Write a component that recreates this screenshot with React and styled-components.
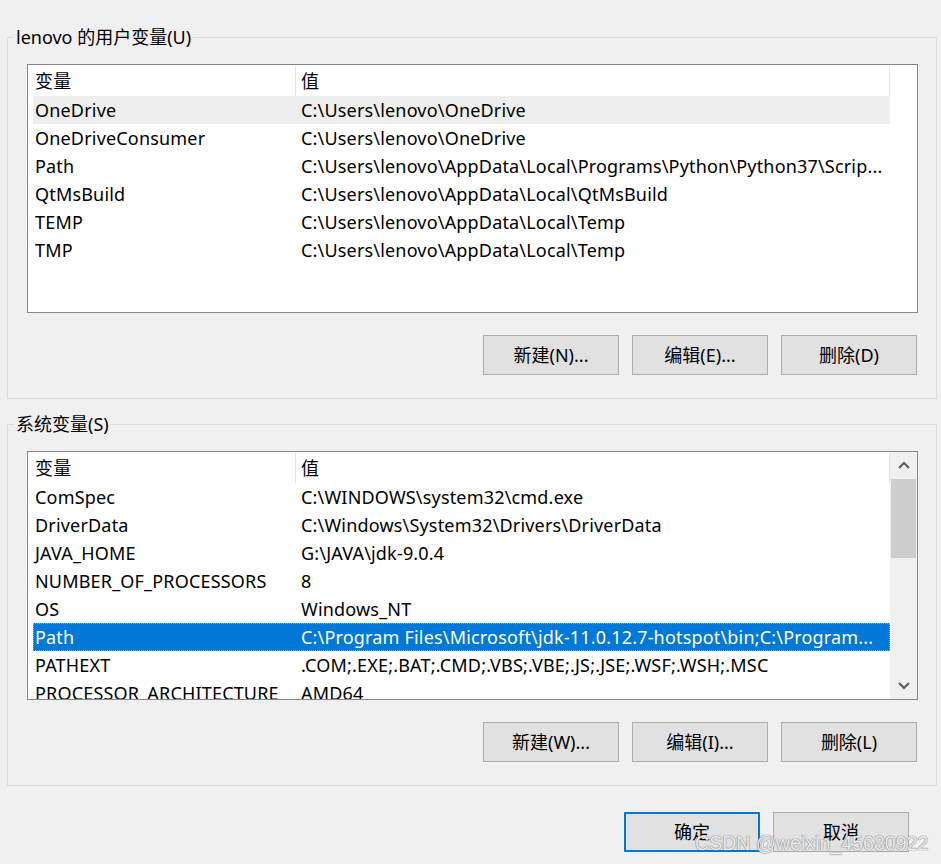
import React from "react";
import styled, { createGlobalStyle } from "styled-components";

const GlobalStyle = createGlobalStyle`
    body {
        margin: 0;
        background: #f0f0f0;
        font-family: "Noto Sans", "Noto Sans CJK SC", sans-serif;
        font-size: 18px;
        color: #000;
    }
`;

const userVars = [
    { name: "OneDrive", value: "C:\\Users\\lenovo\\OneDrive", hover: true },
    { name: "OneDriveConsumer", value: "C:\\Users\\lenovo\\OneDrive" },
    { name: "Path", value: "C:\\Users\\lenovo\\AppData\\Local\\Programs\\Python\\Python37\\Scrip..." },
    { name: "QtMsBuild", value: "C:\\Users\\lenovo\\AppData\\Local\\QtMsBuild" },
    { name: "TEMP", value: "C:\\Users\\lenovo\\AppData\\Local\\Temp" },
    { name: "TMP", value: "C:\\Users\\lenovo\\AppData\\Local\\Temp" },
];

const systemVars = [
    { name: "ComSpec", value: "C:\\WINDOWS\\system32\\cmd.exe" },
    { name: "DriverData", value: "C:\\Windows\\System32\\Drivers\\DriverData" },
    { name: "JAVA_HOME", value: "G:\\JAVA\\jdk-9.0.4" },
    { name: "NUMBER_OF_PROCESSORS", value: "8" },
    { name: "OS", value: "Windows_NT" },
    { name: "Path", value: "C:\\Program Files\\Microsoft\\jdk-11.0.12.7-hotspot\\bin;C:\\Program...", selected: true },
    { name: "PATHEXT", value: ".COM;.EXE;.BAT;.CMD;.VBS;.VBE;.JS;.JSE;.WSF;.WSH;.MSC" },
    { name: "PROCESSOR_ARCHITECTURE", value: "AMD64" },
];

const Page = styled.div`
    position: relative;
    width: 941px;
    height: 864px;
    padding: 37px 0 0 7px;
    box-sizing: border-box;
    overflow: hidden;
`;

const GroupBox = styled.div`
    width: 930px;
    height: 362px;
    border: 1px solid #dcdcdc;
    box-sizing: border-box;
    display: flex;
    flex-direction: column;

    & + & {
        margin-top: 25px;
    }
`;

const GroupTitle = styled.div`
    align-self: flex-start;
    margin: -13px 0 0 6px;
    padding: 0 2px;
    line-height: 24px;
    background: #f0f0f0;
    white-space: nowrap;
`;

const ListBox = styled.div`
    margin: 15px 0 0 19px;
    width: 891px;
    height: 249px;
    border: 1px solid #828790;
    background: #fff;
    box-sizing: border-box;
    display: flex;
    overflow: hidden;
    letter-spacing: 0.18px;
`;

const ListBody = styled.div`
    width: 862px;
    padding-left: 5px;
    box-sizing: border-box;
    overflow: hidden;
`;

const HeaderRow = styled.div`
    display: grid;
    grid-template-columns: 262px 595px;
    height: 31px;
    line-height: 30px;
`;

const HeaderCell = styled.div`
    padding-left: ${(p) => (p.$first ? "2px" : "5px")};
    border-left: ${(p) => (p.$first ? "none" : "1px solid #e5e5e5")};
    border-right: ${(p) => (p.$first ? "none" : "1px solid #e5e5e5")};
    margin-top: 1px;
    white-space: nowrap;
`;

const Row = styled.div`
    display: grid;
    grid-template-columns: 262px 595px;
    height: 28px;
    line-height: 28px;
    box-sizing: border-box;
    background: ${(p) => (p.$selected ? "#0078d7" : p.$hover ? "#eeeeee" : "transparent")};
    color: ${(p) => (p.$selected ? "#fff" : "#000")};
    outline: ${(p) => (p.$selected ? "1px dotted #e39a45" : "none")};
    outline-offset: -1px;
`;

const Cell = styled.div`
    padding-left: ${(p) => (p.$first ? "2px" : "6px")};
    white-space: nowrap;
    overflow: hidden;
`;

const ScrollBar = styled.div`
    width: 27px;
    display: flex;
    flex-direction: column;
    background: #f0f0f0;
`;

const ArrowButton = styled.div`
    height: 27px;
    display: flex;
    align-items: center;
    justify-content: center;
`;

const Thumb = styled.div`
    height: 79px;
    margin: 0 1px 0 1px;
    background: #cdcdcd;
`;

const Track = styled.div`
    flex: 1;
`;

const ButtonRow = styled.div`
    display: flex;
    justify-content: flex-end;
    gap: 13px;
    margin: 22px 19px 0 0;
`;

const Button = styled.button`
    width: 136px;
    height: 40px;
    box-sizing: border-box;
    border: ${(p) => (p.$default ? "2px solid #0078d7" : "1px solid #adadad")};
    background: #e1e1e1;
    font-family: inherit;
    font-size: 18px;
    color: #000;
    padding: 0;
    line-height: 1;
`;

const Footer = styled.div`
    width: 930px;
    box-sizing: border-box;
    display: flex;
    justify-content: flex-end;
    gap: 13px;
    margin-top: 26px;
    padding-right: 28px;
`;

const Watermark = styled.div`
    position: absolute;
    left: 695px;
    top: 832px;
    font-family: "Liberation Sans", Arial, sans-serif;
    font-size: 19.6px;
    line-height: 22px;
    color: rgba(255, 255, 255, 0.85);
    text-shadow: 0 0 1px #8a8a8a, 0 0 1px #8a8a8a, 0 0 1px #8a8a8a;
    white-space: nowrap;
    pointer-events: none;
`;

function Chevron({ down }) {
    return (
        <svg width="12" height="9" viewBox="0 0 12 9">
            <path
                d={down ? "M1 2 L6 7 L11 2" : "M1 7 L6 2 L11 7"}
                fill="none"
                stroke="#606060"
                strokeWidth="2.2"
            />
        </svg>
    );
}

function VarList({ rows, scroll }) {
    return (
        <ListBox>
            <ListBody>
                <HeaderRow>
                    <HeaderCell $first>变量</HeaderCell>
                    <HeaderCell>值</HeaderCell>
                </HeaderRow>
                {rows.map((r) => (
                    <Row key={r.name} $selected={r.selected} $hover={r.hover}>
                        <Cell $first>{r.name}</Cell>
                        <Cell>{r.value}</Cell>
                    </Row>
                ))}
            </ListBody>
            {scroll && (
                <ScrollBar>
                    <ArrowButton>
                        <Chevron />
                    </ArrowButton>
                    <Thumb />
                    <Track />
                    <ArrowButton>
                        <Chevron down />
                    </ArrowButton>
                </ScrollBar>
            )}
        </ListBox>
    );
}

export default function App() {
    return (
        <Page>
            <GlobalStyle />
            <GroupBox>
                <GroupTitle>lenovo 的用户变量(U)</GroupTitle>
                <VarList rows={userVars} />
                <ButtonRow>
                    <Button>新建(N)...</Button>
                    <Button>编辑(E)...</Button>
                    <Button>删除(D)</Button>
                </ButtonRow>
            </GroupBox>
            <GroupBox>
                <GroupTitle>系统变量(S)</GroupTitle>
                <VarList rows={systemVars} scroll />
                <ButtonRow>
                    <Button>新建(W)...</Button>
                    <Button>编辑(I)...</Button>
                    <Button>删除(L)</Button>
                </ButtonRow>
            </GroupBox>
            <Footer>
                <Button $default>确定</Button>
                <Button>取消</Button>
            </Footer>
            <Watermark>CSDN @weixin_45680922</Watermark>
        </Page>
    );
}
